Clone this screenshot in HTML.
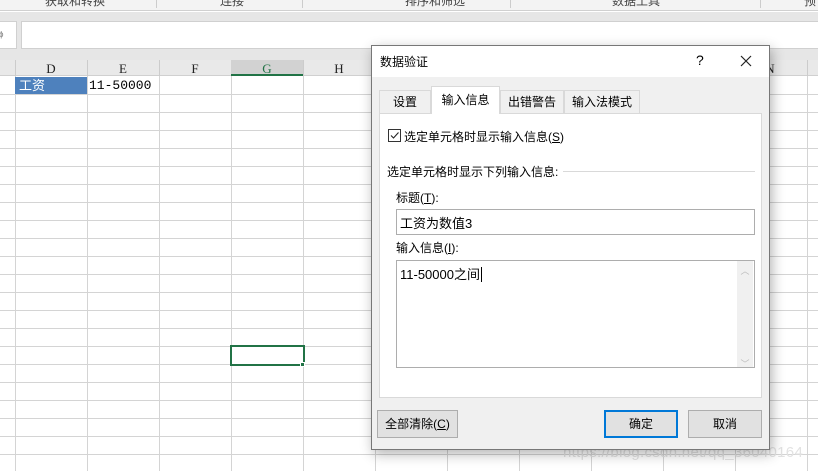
<!DOCTYPE html>
<html><head><meta charset="utf-8"><style>
*{margin:0;padding:0;box-sizing:border-box}
body{width:818px;height:471px;overflow:hidden;background:#fff;position:relative;font-family:"Liberation Sans","Noto Sans CJK SC",sans-serif;font-size:12px;color:#000}
.a{position:absolute}
.vl{position:absolute;top:76px;bottom:0;width:1px;background:#d4d4d4}
.hl{position:absolute;left:0;right:0;height:1px;background:#d4d4d4}
.ch{position:absolute;top:60px;height:16px;font-family:"Liberation Serif","Noto Serif CJK SC",serif;font-size:13px;text-align:center;line-height:17px;color:#222}
.dlg{font-family:"Liberation Sans","Noto Sans CJK SC",sans-serif;font-size:12px}
.btn{position:absolute;top:410px;height:28px;background:#e1e1e1;border:1px solid #adadad;text-align:center;line-height:26px}
</style></head><body>
<div class="a" style="left:0;top:0;width:818px;height:11px;background:#f3f3f3;border-bottom:1px solid #d0d0d0"></div>
<div class="a" style="left:0;top:-8px;width:818px;font-size:12px;color:#444">
<span class="a" style="left:45px">获取和转换</span><span class="a" style="left:220px">连接</span><span class="a" style="left:405px">排序和筛选</span><span class="a" style="left:612px">数据工具</span><span class="a" style="left:804px">预</span></div>
<div class="a" style="left:156px;top:0;width:1px;height:8px;background:#ccc"></div>
<div class="a" style="left:302px;top:0;width:1px;height:8px;background:#ccc"></div>
<div class="a" style="left:510px;top:0;width:1px;height:8px;background:#ccc"></div>
<div class="a" style="left:760px;top:0;width:1px;height:8px;background:#ccc"></div>
<div class="a" style="left:0;top:12px;width:818px;height:48px;background:#e6e6e6"></div>
<div class="a" style="left:-2px;top:21px;width:19px;height:28px;background:#fff;border:1px solid #d0d0d0;font-size:8px;color:#777;line-height:26px">ɸ</div>
<div class="a" style="left:21px;top:21px;width:800px;height:28px;background:#fff;border:1px solid #d0d0d0"></div>
<div class="a" style="left:0;top:60px;width:818px;height:16px;background:#e9e9e9;border-bottom:1px solid #d0d0d0"></div>
<div class="a" style="left:231px;top:60px;width:72px;height:16px;background:#d2d2d2;border-bottom:2px solid #217346"></div>
<div class="ch" style="left:15px;width:72px">D</div><div class="ch" style="left:87px;width:72px">E</div><div class="ch" style="left:159px;width:72px">F</div><div class="ch" style="left:231px;width:72px;color:#217346">G</div><div class="ch" style="left:303px;width:72px">H</div><div class="ch" style="left:760px;width:20px">N</div>
<div class="vl" style="left:15px"></div><div class="vl" style="left:87px"></div><div class="vl" style="left:159px"></div><div class="vl" style="left:231px"></div><div class="vl" style="left:303px"></div><div class="vl" style="left:375px"></div><div class="vl" style="left:447px"></div><div class="vl" style="left:519px"></div><div class="vl" style="left:591px"></div><div class="vl" style="left:663px"></div><div class="vl" style="left:735px"></div><div class="vl" style="left:807px"></div>
<div class="a" style="left:15px;top:60px;width:1px;height:16px;background:#ccc"></div><div class="a" style="left:87px;top:60px;width:1px;height:16px;background:#ccc"></div><div class="a" style="left:159px;top:60px;width:1px;height:16px;background:#ccc"></div><div class="a" style="left:303px;top:60px;width:1px;height:16px;background:#ccc"></div><div class="a" style="left:807px;top:60px;width:1px;height:16px;background:#ccc"></div>
<div class="hl" style="top:94px"></div><div class="hl" style="top:112px"></div><div class="hl" style="top:130px"></div><div class="hl" style="top:148px"></div><div class="hl" style="top:166px"></div><div class="hl" style="top:184px"></div><div class="hl" style="top:202px"></div><div class="hl" style="top:220px"></div><div class="hl" style="top:238px"></div><div class="hl" style="top:256px"></div><div class="hl" style="top:274px"></div><div class="hl" style="top:292px"></div><div class="hl" style="top:310px"></div><div class="hl" style="top:328px"></div><div class="hl" style="top:346px"></div><div class="hl" style="top:364px"></div><div class="hl" style="top:382px"></div><div class="hl" style="top:400px"></div><div class="hl" style="top:418px"></div><div class="hl" style="top:436px"></div><div class="hl" style="top:454px"></div>
<div class="a" style="left:15px;top:77px;width:72px;height:17px;background:#4e81bd;color:#fff;font-size:13px;line-height:17px;padding-left:4px">工资</div>
<div class="a" style="left:89px;top:77px;font-family:'Liberation Mono',monospace;font-size:13px;line-height:17px">11-50000</div>
<div class="a" style="left:230px;top:345px;width:75px;height:21px;border:2px solid #217346"></div>
<div class="a" style="left:300px;top:362px;width:5px;height:5px;background:#217346;border:1px solid #fff"></div>
<div class="a" style="left:563px;top:444px;font-size:15px;color:#e2e2e2;letter-spacing:0.3px">https://blog.csdn.net/qq_36040164</div>
<div class="a dlg" style="left:371px;top:45px;width:399px;height:405px;background:#f0f0f0;border:1px solid #777;box-shadow:2px 4px 12px rgba(0,0,0,.3)">
<div class="a" style="left:0;top:0;width:397px;height:31px;background:#fff"></div>
<div class="a" style="left:8px;top:7px;font-size:12px">数据验证</div>
<div class="a" style="left:324px;top:6px;font-size:14px">?</div>
<svg class="a" style="left:368px;top:9px" width="12" height="12"><path d="M1 1L11 11M11 1L1 11" stroke="#222" stroke-width="1.2"/></svg>
<div class="a" style="left:7px;top:67px;width:383px;height:285px;background:#fff;border:1px solid #d9d9d9"></div>
<div class="a" style="left:7px;top:44px;width:52px;height:23px;border:1px solid #d9d9d9;border-bottom:none;text-align:center;line-height:22px">设置</div>
<div class="a" style="left:59px;top:40px;width:69px;height:28px;background:#fff;border:1px solid #d9d9d9;border-bottom:none;text-align:center;line-height:26px">输入信息</div>
<div class="a" style="left:128px;top:44px;width:64px;height:23px;border:1px solid #d9d9d9;border-bottom:none;text-align:center;line-height:22px">出错警告</div>
<div class="a" style="left:192px;top:44px;width:76px;height:23px;border:1px solid #d9d9d9;border-bottom:none;text-align:center;line-height:22px">输入法模式</div>
<div class="a" style="left:16px;top:83px;width:13px;height:13px;border:1px solid #333;background:#fff"><svg width="11" height="11" style="display:block"><path d="M2 5.5L4.5 8L9.5 2.5" stroke="#222" fill="none" stroke-width="1.1"/></svg></div>
<div class="a" style="left:32px;top:82px">选定单元格时显示输入信息(<u>S</u>)</div>
<div class="a" style="left:15px;top:117px">选定单元格时显示下列输入信息:</div>
<div class="a" style="left:191px;top:125px;width:192px;height:1px;background:#d9d9d9"></div>
<div class="a" style="left:24px;top:143px">标题(<u>T</u>):</div>
<div class="a" style="left:24px;top:163px;width:359px;height:26px;background:#fff;border:1px solid #adadad;padding:3px 0 0 3px;font-size:13px">工资为数值3</div>
<div class="a" style="left:24px;top:193px">输入信息(<u>I</u>):</div>
<div class="a" style="left:24px;top:214px;width:359px;height:108px;background:#fff;border:1px solid #adadad;padding:3px 0 0 3px;font-size:13px">11-50000之间<span style="border-left:1px solid #000;margin-left:1px"></span></div>
<div class="a" style="left:365px;top:215px;width:16px;height:106px;background:#f0f0f0;color:#bbb;font-size:9px;text-align:center"><div style="margin-top:3px">︿</div><div style="margin-top:80px">﹀</div></div>
</div>
<div class="btn dlg" style="left:377px;width:81px">全部清除(<u>C</u>)</div>
<div class="btn dlg" style="left:604px;width:74px;border:2px solid #0078d7;line-height:24px">确定</div>
<div class="btn dlg" style="left:688px;width:74px">取消</div>
</body></html>
